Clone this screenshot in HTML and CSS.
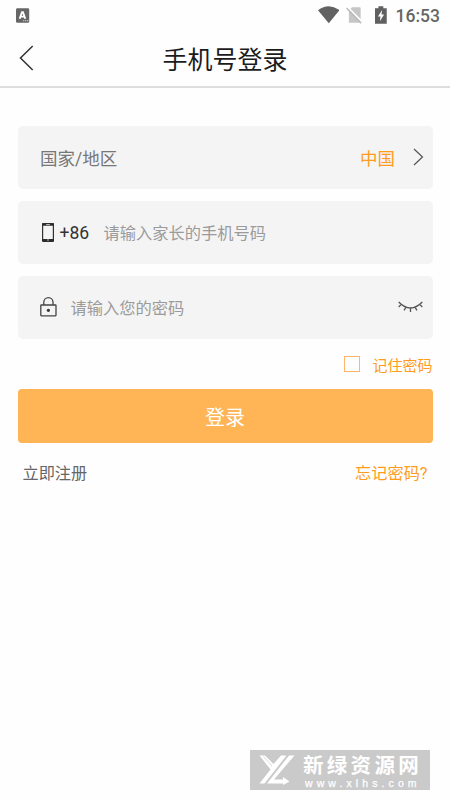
FILE: index.html
```html
<!DOCTYPE html>
<html lang="zh-CN">
<head>
<meta charset="utf-8">
<title>手机号登录</title>
<link rel="stylesheet" href="styles.css">
</head>
<body>
<div class="screen">
  <div class="status">
    <svg class="app-icon" width="14" height="16" viewBox="0 0 14 16"><rect width="13.5" height="15" rx="1.5" fill="#666"/><path d="M3.7 10.8 6.1 4h1l2.4 6.8M4.8 8.6h3.8" fill="none" stroke="#fff" stroke-width="1.9"/><path d="M7 12.8h6" stroke="#ccc" stroke-dasharray="1.5 .6"/></svg>
    <svg class="wifi" width="22" height="18" viewBox="0 0 22 18"><path d="M0 4.1Q11-3.9 22 4.1L11 17.5Z" fill="#626262"/></svg>
    <svg class="sim" width="17" height="18" viewBox="0 0 17 18"><path d="M6 1h8q1 0 1 1v15H3V5Z" fill="#c6c6c6"/><path d="M1.5.5 17 16.5" stroke="#fefefe" stroke-width="1.6"/><path d="M.5 1.8 15.5 17.5" stroke="#bbb" stroke-width="1.5"/></svg>
    <svg class="battery" width="12" height="18" viewBox="0 0 12 18"><path d="M3.5 0h5v2H12v16H0V2h3.5Z" fill="#606060"/><path d="M7.3 4 3 10.5h2.6L5 15.5l4.3-7H6.6Z" fill="#fff"/></svg>
    <span class="time">16:53</span>
  </div>
  <header class="header">
    <svg class="back" width="15" height="26" viewBox="0 0 15 26"><path d="M13.7 1 1.5 13l12.2 12" fill="none" stroke="#333" stroke-width="1.5"/></svg>
    <h1>手机号登录</h1>
  </header>
  <main class="form">
    <div class="field region">
      <span class="label">国家/地区</span>
      <span class="country">中国</span>
      <svg width="11" height="18" viewBox="0 0 11 18"><path d="M1 1 9.5 9 1 17" fill="none" stroke="#555" stroke-width="1.2"/></svg>
    </div>
    <div class="field phone">
      <svg width="12" height="19" viewBox="0 0 12 19"><rect x=".6" y=".6" width="10.8" height="17.8" rx="1" fill="none" stroke="#333" stroke-width="1.2"/><path d="M0 1.5h12M0 17.2h12" stroke="#2b2b2b" stroke-width="2.5"/><path d="M4 1.6h4M5 17h2" stroke="#ddd" stroke-width=".8"/></svg>
      <span class="code">+86</span>
      <span class="hint">请输入家长的手机号码</span>
    </div>
    <div class="field password">
      <svg width="17" height="20" viewBox="0 0 17 20"><rect x=".8" y="8" width="15.2" height="10.8" rx=".5" fill="none" stroke="#444" stroke-width="1.3"/><path d="M3.8 8V5.3a4.6 4.6 0 0 1 9.2 0V8" fill="none" stroke="#444" stroke-width="1.3"/><circle cx="8.4" cy="13.3" r="1.6" fill="#333"/></svg>
      <span class="hint">请输入您的密码</span>
      <svg class="eye" width="25" height="12" viewBox="0 0 25 12"><path d="M.7 1Q12.5 13 24.3 1M3.2 3.4.7 6M8 6.3 6 9.3M12.5 7v4M17 6.3l2 3M21.8 3.4l2.5 2.6" fill="none" stroke="#555" stroke-width="1.3"/></svg>
    </div>
    <div class="remember"><span class="box"></span><span>记住密码</span></div>
    <div class="submit">登录</div>
    <div class="links"><span>立即注册</span><span class="forgot">忘记密码?</span></div>
  </main>
  <div class="watermark">
    <svg width="36" height="30" viewBox="0 0 36 30"><path d="M.5.5H6L14.500 9 22 .500h5.500L5.500 28.500H.500L11.500 14.500Z" fill="#fff"/><path d="M30 .5h5.500L15 24.500h9v-2.500l6.500 4.500-6.500 3.500v-1.500H8Z" fill="#fff"/><path d="M4.500 1.500 13 11" stroke="#cacaca" stroke-width=".7"/></svg>
    <div class="site"><span class="name">新绿资源网</span><span class="url">www.xlhs.com</span></div>
  </div>
</div>
</body>
</html>
```
FILE: styles.css
```css
* { box-sizing: border-box; }
body { margin: 0; background: #fff; font-family: Roboto, "Noto Sans CJK SC", sans-serif; }
.screen { position: relative; width: 450px; height: 800px; overflow: hidden; background: #fefefe; }
.status { display: flex; height: 32px; align-items: flex-start; padding: 6px 10px 0 16px; }
.app-icon { margin-top: 2px; }
.wifi { margin-left: 288px; }
.sim { margin-left: 7px; }
.battery { margin-left: 12px; }
.time { margin-left: 9px; font-size: 17.5px; line-height: 20px; font-weight: 500; color: #666; }
.header { display: flex; align-items: center; height: 55.5px; padding: 0 19px; border-bottom: 2px solid #dedede; }
.back { flex: none; margin-top: -2px; }
h1 { flex: 1; margin: 5px 15px 0 0; text-align: center; font-size: 25px; line-height: 34px; font-weight: 400; color: #1c1c1c; }
.form { padding: 38.5px 17.5px 0; }
.field { display: flex; align-items: center; height: 62.5px; margin-bottom: 12.5px; border-radius: 5px; background: #f4f4f4; }
.region { padding: 0 9px 0 22.5px; font-size: 17.5px; color: #777; }
.country { margin-left: auto; margin-right: 17.5px; color: #ff9c20; }
.phone { padding-left: 24px; }
.code { margin: 2px 0 0 6px; width: 44px; font-size: 17.5px; color: #333; }
.hint { font-size: 16.25px; color: #9b9b9b; white-space: nowrap; }
.password { padding: 0 10px 0 22px; }
.password .hint { margin-left: 14px; }
.eye { margin-left: auto; }
.remember { display: flex; justify-content: flex-end; align-items: center; height: 26px; font-size: 15px; color: #ff9c20; }
.box { width: 16px; height: 16px; margin: -1px 12px 0 0; border: 1px solid #ffb66b; }
.submit { height: 54.5px; margin-top: 11.5px; border-radius: 4px; background: #ffb455; color: #fff; text-align: center; font-size: 20px; line-height: 58px; }
.links { display: flex; justify-content: space-between; padding: 19px 5px 0; font-size: 16.2px; line-height: 24px; color: #666; }
.forgot { color: #ff9c20; }
.watermark { position: absolute; left: 250px; top: 750px; width: 180px; height: 40px; display: flex; align-items: center; padding-left: 9px; background: #cacaca; color: #fff; }
.site { display: flex; flex-direction: column; margin: 3px 0 0 8px; }
.name { font-size: 20.5px; line-height: 23px; font-weight: 700; letter-spacing: 3.3px; white-space: nowrap; }
.url { padding-left: 2px; font: 10.5px/11px "Liberation Sans", sans-serif; letter-spacing: 4.1px; white-space: nowrap; -webkit-text-stroke: .25px #fff; }
```
